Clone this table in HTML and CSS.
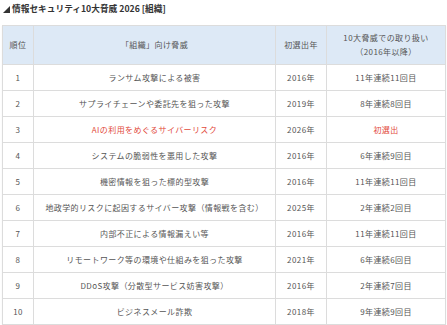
FILE: index.html
```html
<!DOCTYPE html>
<html lang="ja">
<head>
<meta charset="utf-8">
<link rel="stylesheet" href="styles.css">
</head>
<body>
<div class="page">
  <h2 class="title"><svg class="tri" width="7" height="7" viewBox="0 0 7 7"><polygon points="7,0 7,7 0,7" fill="#333"/></svg>情報セキュリティ10大脅威 2026 [組織]</h2>
  <table class="rank">
    <colgroup>
      <col class="c1"><col class="c2"><col class="c3"><col class="c4">
    </colgroup>
    <thead>
      <tr><th>順位</th><th>「組織」向け脅威</th><th>初選出年</th><th>10大脅威での取り扱い<br>（2016年以降）</th></tr>
    </thead>
    <tbody>
      <tr><td>1</td><td>ランサム攻撃による被害</td><td>2016年</td><td>11年連続11回目</td></tr>
      <tr><td>2</td><td>サプライチェーンや委託先を狙った攻撃</td><td>2019年</td><td>8年連続8回目</td></tr>
      <tr><td>3</td><td class="red">AIの利用をめぐるサイバーリスク</td><td>2026年</td><td class="red">初選出</td></tr>
      <tr><td>4</td><td>システムの脆弱性を悪用した攻撃</td><td>2016年</td><td>6年連続9回目</td></tr>
      <tr><td>5</td><td>機密情報を狙った標的型攻撃</td><td>2016年</td><td>11年連続11回目</td></tr>
      <tr><td>6</td><td>地政学的リスクに起因するサイバー攻撃（情報戦を含む）</td><td>2025年</td><td>2年連続2回目</td></tr>
      <tr><td>7</td><td>内部不正による情報漏えい等</td><td>2016年</td><td>11年連続11回目</td></tr>
      <tr><td>8</td><td>リモートワーク等の環境や仕組みを狙った攻撃</td><td>2021年</td><td>6年連続6回目</td></tr>
      <tr><td>9</td><td>DDoS攻撃（分散型サービス妨害攻撃）</td><td>2016年</td><td>2年連続7回目</td></tr>
      <tr><td>10</td><td>ビジネスメール詐欺</td><td>2018年</td><td>9年連続9回目</td></tr>
    </tbody>
  </table>
</div>
</body>
</html>
```
FILE: styles.css
```css
html, body {
  margin: 0;
  padding: 0;
  background: #fff;
}
body {
  font-family: "Noto Sans CJK JP", "Noto Sans", sans-serif;
  color: #555;
}
.page {
  padding: 3px 2px 0 2px;
}
.title {
  margin: 0;
  font-size: 8.7px;
  line-height: 12px;
  font-weight: bold;
  color: #333;
  display: flex;
  align-items: center;
  gap: 2px;
  padding-left: 1px;
}
.tri {
  flex: none;
}
.rank {
  margin-top: 10px;
  width: 443px;
  border-collapse: collapse;
  table-layout: fixed;
  font-size: 8px;
  letter-spacing: 0.4px;
  box-shadow: 0 1px 1px rgba(0,0,0,0.08);
}
.c1 { width: 31px; }
.c2 { width: 242px; }
.c3 { width: 51px; }
.c4 { width: 119px; }
.rank th, .rank td {
  border: 1px solid #dcdcdc;
  text-align: center;
  padding: 0;
}
.rank th {
  background: #dde9f6;
  font-weight: normal;
  height: 38px;
  line-height: 14px;
  color: #555;
}
.rank td {
  height: 25px;
  line-height: 12px;
}
.red {
  color: #e24a3b;
}
```
